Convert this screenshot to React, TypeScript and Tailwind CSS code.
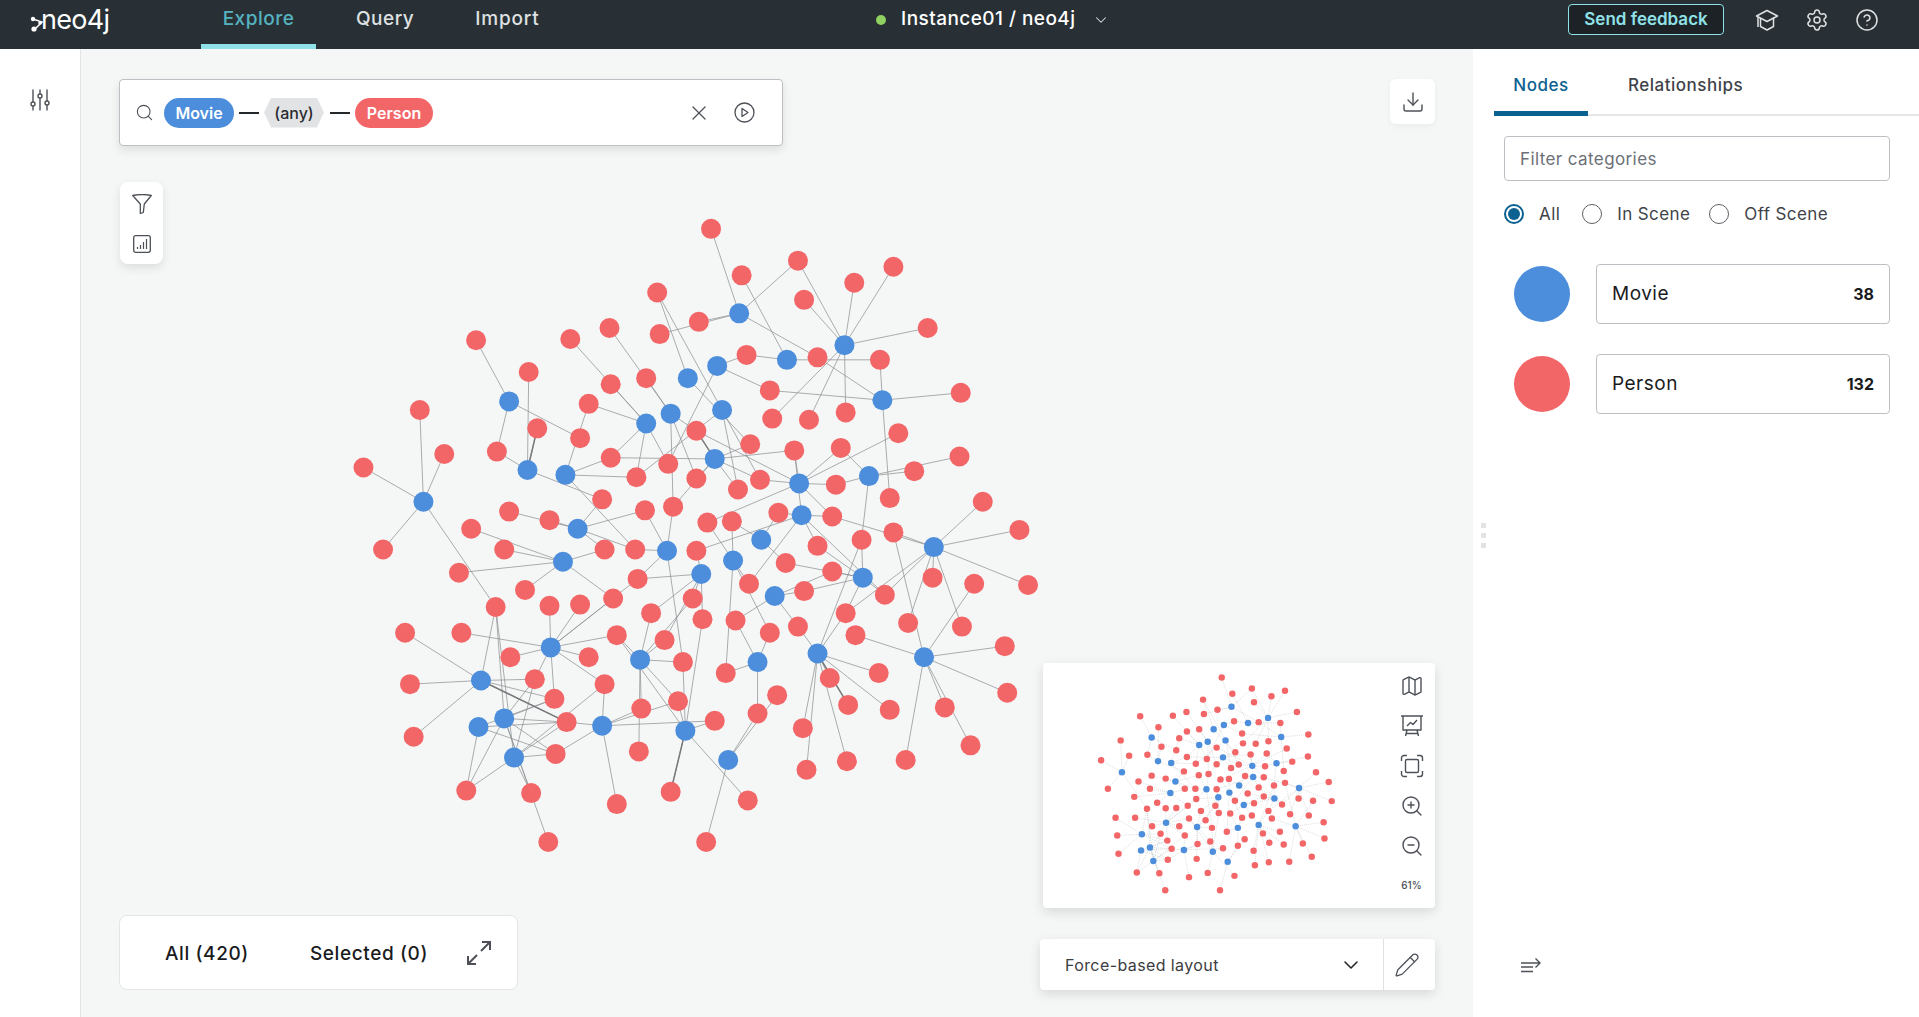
import { ChevronDown, Pencil, Search, X, Download, Settings, CircleHelp, Map, ZoomIn, ZoomOut } from "lucide-react";

// node positions measured from the screenshot (shrunk 1568 wide coords)
const RED = [
  [581,187],[606,225],[652,213],[698,231],[730,218],[537,239],[657,245],[758,268],[389,278],[466,277],[498,268],[539,273],[571,263],[610,290],[668,292],[719,294],[432,304],[499,314],[528,309],[481,330],[629,319],[785,321],[343,335],[439,350],[569,352],[631,342],[661,343],[691,337],[734,354],[363,371],[406,369],[474,358],[499,374],[613,363],[687,366],[649,368],[784,373],[297,382],[520,390],[546,379],[569,391],[621,392],[603,400],[683,396],[747,385],[492,408],[527,417],[550,414],[416,418],[449,425],[727,407],[803,410],[636,419],[680,422],[578,427],[598,426],[385,432],[730,435],[833,433],[704,441],[412,449],[494,449],[519,449],[569,450],[668,446],[313,449],[642,460],[680,467],[521,473],[375,468],[762,472],[840,478],[612,477],[796,477],[429,482],[566,489],[657,483],[723,486],[405,496],[449,495],[474,494],[501,489],[532,501],[691,501],[574,506],[601,507],[742,509],[786,512],[652,512],[504,519],[629,517],[699,519],[331,517],[377,517],[543,523],[821,528],[417,537],[481,537],[558,541],[593,550],[437,555],[494,559],[678,554],[718,550],[335,559],[823,566],[453,571],[635,568],[463,590],[524,579],[554,573],[584,589],[619,583],[693,576],[727,580],[772,578],[656,595],[338,602],[454,616],[522,614],[793,609],[659,629],[692,622],[740,621],[381,646],[434,648],[504,657],[548,647],[611,654],[448,688],[577,688],
];
const BLUE = [
  [604,256],[690,282],[643,294],[586,299],[562,309],[721,327],[416,328],[590,335],[548,338],[528,346],[584,375],[431,384],[462,388],[710,389],[653,395],[346,410],[655,421],[472,432],[622,441],[763,447],[545,450],[460,459],[599,458],[573,469],[705,472],[633,487],[450,529],[668,534],[755,537],[523,539],[619,541],[393,556],[412,587],[391,594],[492,593],[560,597],[420,619],[595,621],
];
const K = 1919 / 1568;

// edges read off the outer ring of the graph: red x, y, blue x, y
const FIXED = [
  [581,187,604,256],[606,225,643,294],[652,213,604,256],[652,213,690,282],[657,245,690,282],[698,231,690,282],[730,218,690,282],[758,268,690,282],
  [668,292,604,256],[668,292,721,327],[719,294,643,294],[719,294,721,327],[785,321,721,327],[629,319,586,299],[629,319,721,327],[631,342,690,282],[661,343,690,282],[691,337,690,282],
  [727,407,721,327],[734,354,653,395],[784,373,710,389],[747,385,710,389],[803,410,763,447],[833,433,763,447],[840,478,763,447],[762,472,763,447],[742,509,763,447],[786,512,763,447],
  [796,477,755,537],[821,528,755,537],[823,566,755,537],[793,609,755,537],[772,578,755,537],[740,621,755,537],[699,519,755,537],[718,550,668,534],[727,580,668,534],[693,576,668,534],[678,554,668,534],[659,629,668,534],[692,622,668,534],[656,595,668,534],
  [635,568,595,621],[577,688,595,621],[611,654,560,597],[548,647,560,597],[504,657,492,593],[522,614,523,539],[331,517,393,556],[335,559,393,556],[338,602,393,556],
  [377,517,450,529],[381,646,391,594],[381,646,412,587],[381,646,420,619],[434,648,420,619],[434,648,412,587],[448,688,412,587],[405,496,393,556],[405,496,420,619],[405,496,412,587],[405,496,346,410],
  [417,537,450,529],[449,495,450,529],[474,494,450,529],[375,468,460,459],[385,432,460,459],[412,449,460,459],[429,482,460,459],[416,418,472,432],[449,425,472,432],
  [389,278,416,328],[343,335,346,410],[363,371,346,410],[297,382,346,410],[313,449,346,410],[432,304,431,384],[439,350,431,384],[406,369,416,328],[406,369,431,384],[474,358,416,328],[466,277,528,346],[499,314,528,346],[498,268,548,338],[528,309,548,338],[537,239,562,309],[537,239,590,335],[539,273,604,256],[571,263,604,256],
  [453,571,393,556],[453,571,412,587],[453,571,391,594],[453,571,450,529],[463,590,393,556],[463,590,412,587],[463,590,391,594],[463,590,420,619],[463,590,492,593],[454,616,412,587],[454,616,391,594],[454,616,420,619],[454,616,492,593],[437,555,393,556],[437,555,412,587],[437,555,420,619],[437,555,450,529],[481,537,450,529],[494,559,450,529],[494,559,492,593],[494,559,420,619],
];
// the darker, doubled links
const HEAVY = [[439,350,431,384],[548,647,560,597],[693,576,668,534],[463,590,393,556],[569,352,584,375]];

const EDGES: number[][] = [...FIXED];
const done = new Set(FIXED.map((e) => `${e[0]},${e[1]}`));
RED.forEach(([x, y], i) => {
  if (done.has(`${x},${y}`)) return;
  // inner nodes: nearest movie plus a longer link, which gives the tangle in the middle
  const order = BLUE.map(([bx, by], j) => [Math.hypot(bx - x, by - y), j]).sort((a, b) => a[0] - b[0]);
  EDGES.push([x, y, ...BLUE[order[0][1]]]);
  if (order[1][0] < 80 && i % 3 !== 0) EDGES.push([x, y, ...BLUE[order[1][1]]]);
  if (i % 3 !== 1) EDGES.push([x, y, ...BLUE[order[3 + (i % 5)][1]]]);
});

function Graph({ r, stroke, width, dash, heavy }: { r: number; stroke: string; width: number; dash?: string; heavy?: boolean }) {
  return (
    <g>
      {EDGES.map((e, i) => (
        <line key={i} x1={e[0] * K} y1={e[1] * K} x2={e[2] * K} y2={e[3] * K} stroke={stroke} strokeWidth={width} strokeDasharray={dash} strokeOpacity={0.75} />
      ))}
      {heavy && HEAVY.map((e, i) => (
        <line key={i} x1={e[0] * K} y1={e[1] * K} x2={e[2] * K} y2={e[3] * K} stroke="#77797b" strokeWidth={1.5} />
      ))}
      {RED.map(([x, y], i) => <circle key={i} cx={x * K} cy={y * K} r={r} fill="#f36668" />)}
      {BLUE.map(([x, y], i) => <circle key={i} cx={x * K} cy={y * K} r={r} fill="#4c8edb" />)}
    </g>
  );
}

const SlidersIcon = () => (
  <svg width="24" height="24" viewBox="0 0 24 24" fill="none" stroke="#4d5157" strokeWidth="1.4">
    <path d="M5 1.500v21M12 1.500v21M19 1.500v21" />
    <circle cx="5" cy="16" r="2" fill="#fff" />
    <circle cx="12" cy="8" r="2" fill="#fff" />
    <circle cx="19" cy="15" r="2" fill="#fff" />
  </svg>
);

const PlayCircle = () => (
  <svg width="21" height="21" viewBox="0 0 21 21" fill="none" stroke="#4d5157" strokeWidth="1.3">
    <circle cx="10.500" cy="10.500" r="9.500" />
    <path d="M8 6.500l6 4-6 4z" strokeLinejoin="round" />
  </svg>
);

const FunnelIcon = () => (
  <svg width="20" height="20" viewBox="0 0 20 20" fill="none" stroke="#4d5157" strokeWidth="1.3" strokeLinejoin="round">
    <path d="M0.700 1.500c5-1 13.600-1 18.600 0l-7 8.500-1 8.500-3 1v-9.500z" />
  </svg>
);

const StatsIcon = () => (
  <svg width="18" height="18" viewBox="0 0 18 18" fill="none" stroke="#4d5157" strokeWidth="1.3">
    <rect x="0.700" y="0.700" width="16.600" height="16.600" rx="2" />
    <path d="M4.500 14v-2M7.500 14v-4M10.500 14V7M13.500 14V4" strokeWidth="1.2" />
  </svg>
);

const CollapseIcon = () => (
  <svg width="22" height="16" viewBox="0 0 22 16" fill="none" stroke="#4d5157" strokeWidth="1.4">
    <path d="M1 6h19M15.500 1.500L20 6l-4.500 4.500M1 10h12M1 14.500h12" />
  </svg>
);

const ExpandIcon = () => (
  <svg width="26" height="26" viewBox="0 0 26 26" fill="none" stroke="#4d5157" strokeWidth="2">
    <path d="M15 11l9-9M16 2h8v8M11 15l-9 9M2 16v8h8" />
  </svg>
);

const CapIcon = () => (
  <svg width="24" height="24" viewBox="0 0 24 24" fill="none" stroke="currentColor" strokeWidth="1.5" strokeLinejoin="round">
    <path d="M12 2.500L22.500 8 12 13.500 1.500 8z" />
    <path d="M5.500 10.500v8l6.500 3.500 6.500-3.500V9.500" />
    <path d="M3 9v10" />
  </svg>
);

const BoardIcon = () => (
  <svg width="24" height="24" viewBox="0 0 24 24" fill="none" stroke="currentColor" strokeWidth="1.4" strokeLinejoin="round">
    <path d="M1 2h22M3 2v14h18V2M7 16l-1.500 6M17 16l1.500 6M5.500 19.500h13" />
    <path d="M7 12l3.500-3.500 2.500 2L17 6" />
  </svg>
);

const FitIcon = () => (
  <svg width="24" height="24" viewBox="0 0 24 24" fill="none" stroke="currentColor" strokeWidth="1.4">
    <path d="M1.500 7V4a2.500 2.500 0 0 1 2.500-2.500h3M17 1.500h3A2.500 2.500 0 0 1 22.500 4v3M22.500 17v3a2.500 2.500 0 0 1-2.500 2.500h-3M7 22.500H4A2.500 2.500 0 0 1 1.500 20v-3" />
    <rect x="5.500" y="5.500" width="13" height="13" rx="1.500" />
  </svg>
);

const Logo = () => (
  <div className="flex items-center text-white">
    <svg width="14" height="22" viewBox="0 0 14 22" fill="none" className="mt-1">
      <path d="M3 8l9 3-7 7" stroke="#fff" strokeWidth="1.500" />
      <circle cx="3" cy="8" r="2.200" fill="#fff" />
      <circle cx="10" cy="12" r="1.800" fill="#fff" />
      <circle cx="4" cy="18" r="2.600" fill="#fff" />
    </svg>
    <span className="-ml-[3px] font-['Inter',sans-serif] text-[27px] leading-none tracking-tight">neo4j</span>
  </div>
);

export default function App() {
  return (
    <div className="flex h-[1017px] w-[1919px] flex-col overflow-hidden bg-white font-['Inter',sans-serif] text-[#1a1b1d]">
      <header className="relative flex h-[49px] shrink-0 items-center bg-[#283035] pl-[30px] text-[19px] text-[#dfe1e3]">
        <div className="w-[171px] pb-[10px]"><Logo /></div>
        <nav className="flex h-full tracking-[0.5px]">
          <a className="flex h-[49px] w-[115px] items-center justify-center rounded-t-[4px] border-b-[5px] border-[#8fe3e8] pb-[6px] font-medium text-[#55b3c0]">Explore</a>
          <a className="ml-[40px] flex items-center pb-[10px] font-medium">Query</a>
          <a className="ml-[61px] flex items-center pb-[10px] font-medium tracking-[0.8px]">Import</a>
        </nav>
        <div className="absolute left-[876px] top-0 flex h-full items-center pb-[10px] text-white">
          <span className="h-[10px] w-[10px] rounded-full bg-[#8fd262]" />
          <span className="ml-[15px] font-medium tracking-[0.45px]">Instance01 / neo4j</span>
          <ChevronDown size={18} strokeWidth={1.4} className="ml-[17px] text-[#dfe1e3]" />
        </div>
        <div className="absolute right-[40px] top-0 flex h-full items-center pb-[10px]">
          <button className="mr-[31px] h-[31px] w-[156px] rounded-[4px] border border-[#8fe3e8] bg-[#1d2226] text-[17px] font-semibold text-[#8fe3e8]">Send feedback</button>
          <span className="mr-[26px]"><CapIcon /></span>
          <Settings size={24} strokeWidth={1.5} className="mr-[26px]" />
          <CircleHelp size={24} strokeWidth={1.5} />
        </div>
      </header>

      <div className="flex min-h-0 flex-1">
        <aside className="flex w-[81px] shrink-0 justify-center border-r border-[#e2e5e7] pt-[39px]">
          <SlidersIcon />
        </aside>

        <main className="relative flex-1 bg-[#f5f7f7]">
          <svg className="absolute left-[-81px] top-[-49px]" width="1473" height="1017">
            <Graph r={10} stroke="#8f9294" width={1} heavy />
          </svg>

          <div className="absolute left-[38px] top-[30px] flex h-[67px] w-[664px] items-center rounded-[4px] border border-[#bcc0c4] bg-white pl-[15px] pr-[27px] shadow-[0_4px_10px_rgba(0,0,0,0.1)]">
            <Search size={19} strokeWidth={1.4} className="text-[#4d5157]" />
            <span className="ml-[10px] flex h-[30px] w-[70px] items-center justify-center rounded-full bg-[#4c8edb] text-[16px] font-semibold text-white">Movie</span>
            <span className="ml-[5px] h-[2px] w-[20px] bg-[#25282b]" />
            <span className="ml-[5px] flex h-[30px] w-[60px] items-center justify-center bg-[#e2e3e5] text-[16px] font-medium text-[#2a2c30] [clip-path:polygon(12%_0,88%_0,100%_50%,88%_100%,12%_100%,0_50%)]">(any)</span>
            <span className="ml-[6px] h-[2px] w-[20px] bg-[#25282b]" />
            <span className="ml-[5px] flex h-[30px] w-[78px] items-center justify-center rounded-full bg-[#f36668] text-[16px] font-semibold text-white">Person</span>
            <X size={24} strokeWidth={1.3} className="ml-auto text-[#4d5157]" />
            <span className="ml-[23px]"><PlayCircle /></span>
          </div>

          <div className="absolute left-[39px] top-[133px] flex h-[82px] w-[43px] flex-col items-center justify-center gap-[21px] rounded-[8px] bg-white shadow-[0_4px_10px_rgba(0,0,0,0.1)]">
            <FunnelIcon />
            <StatsIcon />
          </div>

          <button className="absolute right-[38px] top-[30px] flex h-[45px] w-[45px] items-center justify-center rounded-[6px] bg-white shadow-[0_2px_6px_rgba(0,0,0,0.05)]">
            <Download size={24} strokeWidth={1.4} className="text-[#4d5157]" />
          </button>

          <div className="absolute left-[962px] top-[614px] flex h-[245px] w-[392px] rounded-[4px] bg-white shadow-[0_4px_12px_rgba(0,0,0,0.12)]">
            <svg className="absolute left-0 top-0" width="330" height="245" viewBox="0 0 951 706">
              <g transform="translate(-196 -187)">
                <Graph r={9.300} stroke="#bcbfc1" width={2} dash="3 3" />
              </g>
            </svg>
            <div className="ml-auto mr-[12px] flex w-[23px] flex-col items-center gap-[16px] pt-[11px] text-[#4d5157]">
              <Map size={24} strokeWidth={1.4} />
              <BoardIcon />
              <FitIcon />
              <ZoomIn size={24} strokeWidth={1.4} />
              <ZoomOut size={24} strokeWidth={1.4} />
              <span className="mt-[4px] text-[10px] font-medium">61%</span>
            </div>
          </div>

          <div className="absolute left-[959px] top-[890px] flex h-[51px] w-[395px] items-center rounded-[4px] bg-white shadow-[0_4px_12px_rgba(0,0,0,0.12)]">
            <span className="ml-[25px] text-[16px] tracking-[0.4px] text-[#3b3d41]">Force-based layout</span>
            <ChevronDown size={24} strokeWidth={1.6} className="ml-auto mr-[20px] text-[#25282b]" />
            <div className="flex h-full w-[52px] items-center justify-center border-l border-[#dfe1e3] pr-[5px]">
              <Pencil size={26} strokeWidth={1.2} className="text-[#4d5157]" />
            </div>
          </div>

          <div className="absolute left-[38px] top-[866px] flex h-[75px] w-[399px] items-center rounded-[8px] border border-[#e3e5e7] bg-white pl-[45px] pt-[3px] text-[19px] font-medium tracking-[0.6px]">
            <span>All (420)</span>
            <span className="ml-[61px]">Selected (0)</span>
            <span className="ml-[38px] -mt-[2px]"><ExpandIcon /></span>
          </div>
        </main>

        <aside className="relative flex w-[446px] shrink-0 flex-col">
          <div className="ml-[21px] flex h-[67px] border-b-2 border-[#e4e6e8] text-[17px] font-medium tracking-[0.5px]">
            <span className="-mb-[2px] flex h-[67px] w-[94px] items-center justify-center rounded-t-[2px] border-b-[5px] border-[#0b6190] pt-[11px] text-[#0b6190]">Nodes</span>
            <span className="ml-[40px] flex items-center pt-[8px] text-[#3f4349]">Relationships</span>
          </div>

          <div className="ml-[31px] mr-[29px] mt-[20px] flex h-[45px] items-center rounded-[4px] border border-[#bcc0c4] px-[15px] pt-[2px] text-[17px] tracking-[0.4px] text-[#6c7076]">Filter categories</div>

          <div className="ml-[31px] mt-[23px] flex h-[20px] items-center text-[17px] tracking-[0.4px] text-[#3f4349]">
            <span className="flex h-[20px] w-[20px] items-center justify-center rounded-full border-2 border-[#0b6190]">
              <span className="h-[12px] w-[12px] rounded-full bg-[#0b6190]" />
            </span>
            <span className="ml-[15px] pt-[1px]">All</span>
            <span className="ml-[22px] h-[20px] w-[20px] rounded-full border border-[#5d6166]" />
            <span className="ml-[15px] pt-[1px]">In Scene</span>
            <span className="ml-[19px] h-[20px] w-[20px] rounded-full border border-[#5d6166]" />
            <span className="ml-[15px] pt-[1px]">Off Scene</span>
          </div>

          <div className="ml-[41px] mr-[29px] mt-[40px] flex items-center">
            <span className="h-[56px] w-[56px] rounded-full bg-[#4c8edb]" />
            <div className="ml-[26px] flex h-[60px] flex-1 items-center justify-between rounded-[4px] border border-[#bcc0c4] px-[15px] text-[19px] tracking-[0.5px]">
              <span className="pt-[1px]">Movie</span>
              <span className="text-[16px] font-bold tracking-normal">38</span>
            </div>
          </div>
          <div className="ml-[41px] mr-[29px] mt-[30px] flex items-center">
            <span className="h-[56px] w-[56px] rounded-full bg-[#f36668]" />
            <div className="ml-[26px] flex h-[60px] flex-1 items-center justify-between rounded-[4px] border border-[#bcc0c4] px-[15px] text-[19px] tracking-[0.5px]">
              <span className="pt-[1px]">Person</span>
              <span className="text-[16px] font-bold tracking-normal">132</span>
            </div>
          </div>

          <div className="absolute left-[8px] top-[474px] flex flex-col gap-[5px]">
            <span className="h-[5px] w-[5px] bg-[#e2e3e5]" />
            <span className="h-[5px] w-[5px] bg-[#e2e3e5]" />
            <span className="h-[5px] w-[5px] bg-[#e2e3e5]" />
          </div>

          <div className="mt-auto mb-[44px] ml-[47px]"><CollapseIcon /></div>
        </aside>
      </div>
    </div>
  );
}
